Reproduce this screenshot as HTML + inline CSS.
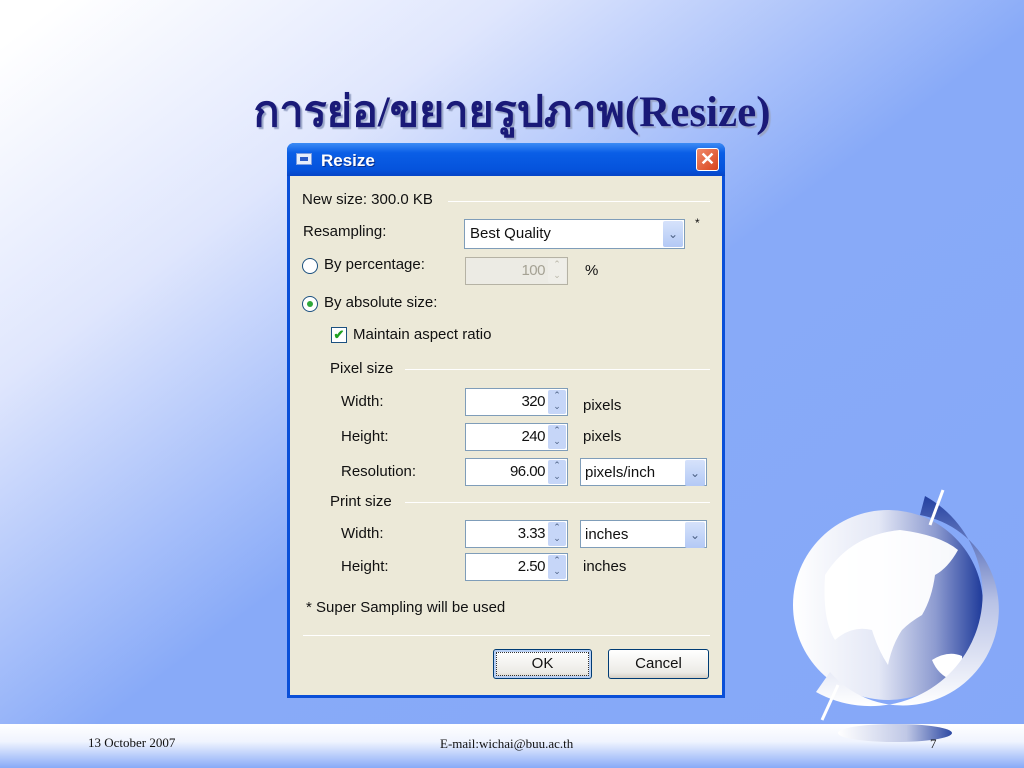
<!DOCTYPE html>
<html><head><meta charset="utf-8"><style>
*{margin:0;padding:0;box-sizing:border-box}
body{width:1024px;height:768px;overflow:hidden;position:relative;background:linear-gradient(to bottom right,#ffffff 3%,#dfe6fd 25%,#88aaf8 52%,#85a8f8 100%);font-family:"Liberation Sans",sans-serif}
.a{position:absolute}
.title{left:0;width:1024px;top:77px;text-align:center;font:bold 43px "Liberation Serif","DejaVu Serif",serif;color:#1a1a78;text-shadow:2px 2px 1px #9aa6c8}
.dlg{left:287px;top:143px;width:438px;height:555px;background:#0a4fd8;border-radius:7px 7px 0 0}
.tb{left:0;top:0;width:438px;height:33px;border-radius:7px 7px 0 0;background:linear-gradient(#3d8cf5,#0a5ee6 30%,#0553dc 80%,#0645c6)}
.tb span{position:absolute;left:34px;top:8px;color:#fff;font-size:17px;font-weight:bold;text-shadow:1px 1px #0a2f8a}
.body{left:3px;top:33px;width:432px;height:519px;background:#ece9d8}
.t{position:absolute;font-size:15px;color:#111;white-space:nowrap}
.line{position:absolute;height:1px;background:#c5c2b2;border-bottom:1px solid #fff}
.inp{position:absolute;background:#fff;border:1px solid #7f9db9;height:28px}
.inp .v{position:absolute;right:22px;top:4px;font-size:15px;color:#111;letter-spacing:-0.5px}
.spin{position:absolute;right:1px;top:1px;width:18px;height:24px;background:#c6d6f8;border-radius:2px;font-size:9px;color:#4d6185;text-align:center;line-height:11px}
.combo .dd{position:absolute;right:1px;top:1px;width:20px;height:26px;background:linear-gradient(#d6e2fb,#b3c9f5);border-radius:2px;color:#4d6185;font-size:12px;text-align:center;line-height:26px}
.btn{position:absolute;height:30px;border:1px solid #003c74;border-radius:3px;background:linear-gradient(#fff,#ecebe6 80%,#d6d0c5);font-size:15px;text-align:center;line-height:28px;color:#111}
</style></head><body>
<div class="a title">การย่อ/ขยายรูปภาพ(Resize)</div>

<div class="a dlg">
 <div class="a tb"><div class="a" style="left:9px;top:10px;width:16px;height:12px;background:#e6eefc;border:1px solid #7d9de0"><div style="margin:3px 3px;height:4px;background:#2c5cc8"></div></div><span>Resize</span>
  <div class="a" style="right:6px;top:5px;width:23px;height:23px;border:1px solid #fff;border-radius:3px;background:linear-gradient(135deg,#f08a6a,#d8431c);color:#fff;font-size:18px;font-weight:bold;text-align:center;line-height:21px">✕</div></div>
 <div class="a body">
  <div class="t" style="left:12px;top:15px">New size: 300.0 KB</div>
  <div class="line" style="left:158px;top:25px;width:262px"></div>
  <div class="t" style="left:13px;top:47px">Resampling:</div>
  <div class="inp combo" style="left:174px;top:43px;width:221px;height:30px"><div class="t" style="left:5px;top:5px">Best Quality</div><div class="dd">&#8964;</div></div>
  <div class="t" style="left:405px;top:40px;font-size:12px">*</div>
  <div class="a" style="left:12px;top:82px;width:16px;height:16px;border-radius:50%;border:1px solid #1c5180;background:#fff"></div>
  <div class="t" style="left:34px;top:80px">By percentage:</div>
  <div class="inp" style="left:175px;top:81px;width:103px;border-color:#b5b2a4;background:#ecebe4"><div class="v" style="color:#a5a294">100</div><div class="spin" style="background:#efeee8;color:#b9b6a8">⌃<br>⌄</div></div>
  <div class="t" style="left:295px;top:86px">%</div>
  <div class="a" style="left:12px;top:120px;width:16px;height:16px;border-radius:50%;border:1px solid #1c5180;background:#fff"><div style="margin:4px;width:6px;height:6px;border-radius:50%;background:#2fa83a"></div></div>
  <div class="t" style="left:34px;top:118px">By absolute size:</div>
  <div class="a" style="left:41px;top:151px;width:16px;height:16px;border:1px solid #1c5180;background:#fff;color:#21a121;font-size:13px;font-weight:bold;line-height:14px;text-align:center">✔</div>
  <div class="t" style="left:63px;top:150px">Maintain aspect ratio</div>
  <div class="t" style="left:40px;top:184px">Pixel size</div>
  <div class="line" style="left:115px;top:193px;width:305px"></div>

  <div class="t" style="left:51px;top:217px">Width:</div>
  <div class="inp" style="left:175px;top:212px;width:103px"><div class="v">320</div><div class="spin">⌃<br>⌄</div></div>
  <div class="t" style="left:293px;top:221px">pixels</div>
  <div class="t" style="left:51px;top:252px">Height:</div>
  <div class="inp" style="left:175px;top:247px;width:103px"><div class="v">240</div><div class="spin">⌃<br>⌄</div></div>
  <div class="t" style="left:293px;top:252px">pixels</div>
  <div class="t" style="left:51px;top:287px">Resolution:</div>
  <div class="inp" style="left:175px;top:282px;width:103px"><div class="v">96.00</div><div class="spin">⌃<br>⌄</div></div>
  <div class="inp combo" style="left:290px;top:282px;width:127px"><div class="t" style="left:4px;top:5px">pixels/inch</div><div class="dd">&#8964;</div></div>
  <div class="t" style="left:40px;top:317px">Print size</div>
  <div class="line" style="left:115px;top:326px;width:305px"></div>
  <div class="t" style="left:51px;top:349px">Width:</div>
  <div class="inp" style="left:175px;top:344px;width:103px"><div class="v">3.33</div><div class="spin">⌃<br>⌄</div></div>
  <div class="inp combo" style="left:290px;top:344px;width:127px"><div class="t" style="left:4px;top:5px">inches</div><div class="dd">&#8964;</div></div>
  <div class="t" style="left:51px;top:382px">Height:</div>
  <div class="inp" style="left:175px;top:377px;width:103px"><div class="v">2.50</div><div class="spin">⌃<br>⌄</div></div>
  <div class="t" style="left:293px;top:382px">inches</div>
  <div class="t" style="left:16px;top:423px">* Super Sampling will be used</div>
  <div class="line" style="left:13px;top:459px;width:407px"></div>
  <div class="btn" style="left:203px;top:473px;width:99px;outline:1px dotted #333;outline-offset:-4px;box-shadow:inset 0 0 0 2px #b8d0f5">OK</div>
  <div class="btn" style="left:318px;top:473px;width:101px">Cancel</div>
 </div>
</div>

<div class="a" style="left:0;top:724px;width:1024px;height:44px;background:linear-gradient(#fff,#f0f4fe 40%,#88aaf8)"></div>

<svg class="a" style="left:780px;top:480px" width="244" height="288" viewBox="0 0 244 288">
 <defs>
  <linearGradient id="g" x1="0" x2="1" y1="0" y2="0"><stop offset="0" stop-color="#fff"/><stop offset=".45" stop-color="#e4e8f6"/><stop offset=".75" stop-color="#8d9bd0"/><stop offset="1" stop-color="#1e3a9a"/></linearGradient>
  <linearGradient id="s" x1="0" x2="1" y1="0" y2="0"><stop offset="0" stop-color="#fff"/><stop offset=".6" stop-color="#c0c8e6"/><stop offset="1" stop-color="#2e4aa4"/></linearGradient>
  <linearGradient id="s2" x1="0" x2="0" y1="0" y2="1"><stop offset="0" stop-color="#2340a0"/><stop offset=".5" stop-color="#b8c2e6"/><stop offset="1" stop-color="#fff"/></linearGradient>
 </defs>
 <circle cx="108" cy="125" r="95" fill="url(#g)"/>
 <path d="M45 95 Q70 55 120 50 Q160 55 178 70 Q168 88 155 95 Q152 118 142 135 Q130 142 122 150 Q112 165 108 185 Q98 170 92 150 Q72 145 55 160 Q42 140 45 95Z" fill="#fff" opacity=".95"/>
 <path d="M152 180 Q168 170 182 176 Q184 192 172 200 Q158 195 152 180Z" fill="#fff"/>
 <path d="M145 16 A112 112 0 1 1 36 212 L50 192 A96 96 0 1 0 140 35 Z" fill="url(#s2)"/>
 <path d="M163 10 L150 45" stroke="#fff" stroke-width="3"/>
 <path d="M58 205 L42 240" stroke="#fff" stroke-width="3"/>
 <ellipse cx="115" cy="253" rx="57" ry="9" fill="url(#s)"/>
 <text x="150" y="268" font-family="Liberation Serif" font-size="13" fill="#111">7</text>
</svg>

<div class="a" style="left:88px;top:735px;font:13px 'Liberation Serif',serif;color:#111">13 October 2007</div>
<div class="a" style="left:440px;top:736px;font:13px 'Liberation Serif',serif;color:#111">E-mail:wichai@buu.ac.th</div>
</body></html>
